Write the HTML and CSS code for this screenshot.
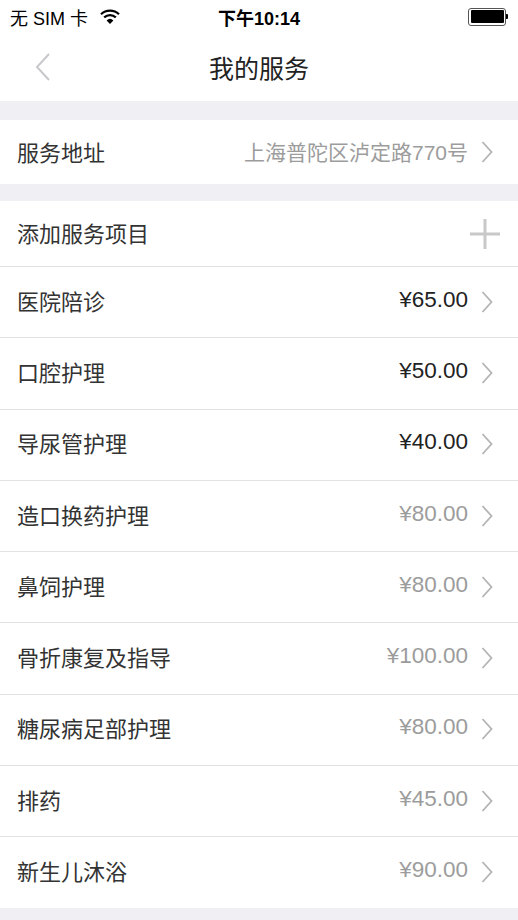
FILE: index.html
```html
<!DOCTYPE html>
<html lang="zh-CN">
<head>
  <meta charset="UTF-8">
  <meta name="viewport" content="width=device-width, initial-scale=1.0">
  <title>我的服务</title>
  <link rel="stylesheet" href="styles.css">
</head>
<body>
  <div class="status-bar">
    <div class="status-left">
      <span>无 SIM 卡</span>
      <svg class="wifi" width="20" height="15" viewBox="0 0 20 15">
        <path d="M1 5.2 A13 13 0 0 1 19 5.2" fill="none" stroke="#000" stroke-width="2.2"/>
        <path d="M4.2 8.4 A8.5 8.5 0 0 1 15.8 8.4" fill="none" stroke="#000" stroke-width="2.2"/>
        <path d="M10 15 L6.6 11.4 A5 5 0 0 1 13.4 11.4 Z" fill="#000"/>
      </svg>
    </div>
    <div class="status-time">下午10:14</div>
    <div class="status-right">
      <div class="battery"><div class="battery-fill"></div></div>
      <div class="battery-nub"></div>
    </div>
  </div>

  <div class="nav-bar">
    <svg class="back" width="18" height="30" viewBox="0 0 18 30">
      <path d="M15 2 L3 15 L15 28" fill="none" stroke="#c8c8cc" stroke-width="2"/>
    </svg>
    <h1 class="nav-title">我的服务</h1>
  </div>

  <div class="group">
    <div class="row row-short">
      <span class="label">服务地址</span>
      <span class="value muted">上海普陀区泸定路770号</span>
      <svg class="chevron" width="12" height="22" viewBox="0 0 12 22"><path d="M1.5 1 L10.5 11 L1.5 21" fill="none" stroke="#b4b4b4" stroke-width="1.8"/></svg>
    </div>
  </div>

  <div class="group">
    <div class="row row-add">
      <span class="label">添加服务项目</span>
      <svg class="plus" width="32" height="32" viewBox="0 0 32 32">
        <path d="M16 1 V31 M1 16 H31" stroke="#c8c8c8" stroke-width="3"/>
      </svg>
    </div>
    <div class="row">
      <span class="label">医院陪诊</span>
      <span class="value">¥65.00</span>
      <svg class="chevron" width="12" height="22" viewBox="0 0 12 22"><path d="M1.5 1 L10.5 11 L1.5 21" fill="none" stroke="#b4b4b4" stroke-width="1.8"/></svg>
    </div>
    <div class="row">
      <span class="label">口腔护理</span>
      <span class="value">¥50.00</span>
      <svg class="chevron" width="12" height="22" viewBox="0 0 12 22"><path d="M1.5 1 L10.5 11 L1.5 21" fill="none" stroke="#b4b4b4" stroke-width="1.8"/></svg>
    </div>
    <div class="row">
      <span class="label">导尿管护理</span>
      <span class="value">¥40.00</span>
      <svg class="chevron" width="12" height="22" viewBox="0 0 12 22"><path d="M1.5 1 L10.5 11 L1.5 21" fill="none" stroke="#b4b4b4" stroke-width="1.8"/></svg>
    </div>
    <div class="row">
      <span class="label">造口换药护理</span>
      <span class="value muted">¥80.00</span>
      <svg class="chevron" width="12" height="22" viewBox="0 0 12 22"><path d="M1.5 1 L10.5 11 L1.5 21" fill="none" stroke="#b4b4b4" stroke-width="1.8"/></svg>
    </div>
    <div class="row">
      <span class="label">鼻饲护理</span>
      <span class="value muted">¥80.00</span>
      <svg class="chevron" width="12" height="22" viewBox="0 0 12 22"><path d="M1.5 1 L10.5 11 L1.5 21" fill="none" stroke="#b4b4b4" stroke-width="1.8"/></svg>
    </div>
    <div class="row">
      <span class="label">骨折康复及指导</span>
      <span class="value muted">¥100.00</span>
      <svg class="chevron" width="12" height="22" viewBox="0 0 12 22"><path d="M1.5 1 L10.5 11 L1.5 21" fill="none" stroke="#b4b4b4" stroke-width="1.8"/></svg>
    </div>
    <div class="row">
      <span class="label">糖尿病足部护理</span>
      <span class="value muted">¥80.00</span>
      <svg class="chevron" width="12" height="22" viewBox="0 0 12 22"><path d="M1.5 1 L10.5 11 L1.5 21" fill="none" stroke="#b4b4b4" stroke-width="1.8"/></svg>
    </div>
    <div class="row">
      <span class="label">排药</span>
      <span class="value muted">¥45.00</span>
      <svg class="chevron" width="12" height="22" viewBox="0 0 12 22"><path d="M1.5 1 L10.5 11 L1.5 21" fill="none" stroke="#b4b4b4" stroke-width="1.8"/></svg>
    </div>
    <div class="row">
      <span class="label">新生儿沐浴</span>
      <span class="value muted">¥90.00</span>
      <svg class="chevron" width="12" height="22" viewBox="0 0 12 22"><path d="M1.5 1 L10.5 11 L1.5 21" fill="none" stroke="#b4b4b4" stroke-width="1.8"/></svg>
    </div>
  </div>
</body>
</html>
```

FILE: styles.css
```css
html, body {
  margin: 0;
  padding: 0;
}

body {
  background: #efeff4;
  font-family: "Liberation Sans", "Noto Sans CJK SC", sans-serif;
  color: #222;
  height: 920px;
  overflow: hidden;
}

.status-bar {
  height: 36px;
  background: #fff;
  display: flex;
  align-items: center;
  justify-content: space-between;
  padding: 0 10px 3px;
  box-sizing: border-box;
  font-size: 18px;
  color: #000;
}

.status-left {
  flex: 1;
  display: flex;
  align-items: center;
  gap: 12px;
}

.status-time {
  font-weight: bold;
}

.status-right {
  flex: 1;
  display: flex;
  justify-content: flex-end;
  align-items: center;
}

.battery {
  width: 33px;
  height: 13px;
  border: 1.5px solid #555;
  border-radius: 3px;
  padding: 1.5px;
}

.battery-fill {
  width: 100%;
  height: 100%;
  background: #000;
  border-radius: 1px;
}

.battery-nub {
  width: 2px;
  height: 5px;
  background: #000;
  border-radius: 0 1px 1px 0;
}

.nav-bar {
  height: 65px;
  background: #fff;
  display: flex;
  align-items: center;
  position: relative;
  margin-bottom: 19px;
  padding-bottom: 3px;
  box-sizing: border-box;
}

.back {
  position: absolute;
  left: 34px;
  top: 16px;
}

.nav-title {
  flex: 1;
  margin: 0;
  text-align: center;
  font-size: 25px;
  font-weight: normal;
  color: #222;
}

.group {
  background: #fff;
  margin-bottom: 17px;
}

.row {
  height: 71.3px;
  display: flex;
  align-items: center;
  padding: 0 25px 5px 17px;
  border-top: 1px solid #e2e2e4;
  box-sizing: border-box;
}

.row:first-child {
  border-top: none;
}

.row-short {
  height: 64px;
  padding-bottom: 3px;
}

.row-add {
  height: 65px;
  padding-right: 17px;
  padding-bottom: 4px;
}

.row-add .plus {
  margin-top: 4px;
}

.row .chevron {
  margin-top: 4px;
}

.row-short .chevron {
  margin-top: 2px;
}

.label {
  flex: 1;
  font-size: 22px;
  color: #333;
}

.value {
  font-size: 22.5px;
  color: #222;
  margin-right: 13px;
}

.value.muted {
  color: #9c9c9c;
}

.row-short .value {
  font-size: 21px;
}

.chevron {
  display: block;
}

.plus {
  display: block;
}
```
